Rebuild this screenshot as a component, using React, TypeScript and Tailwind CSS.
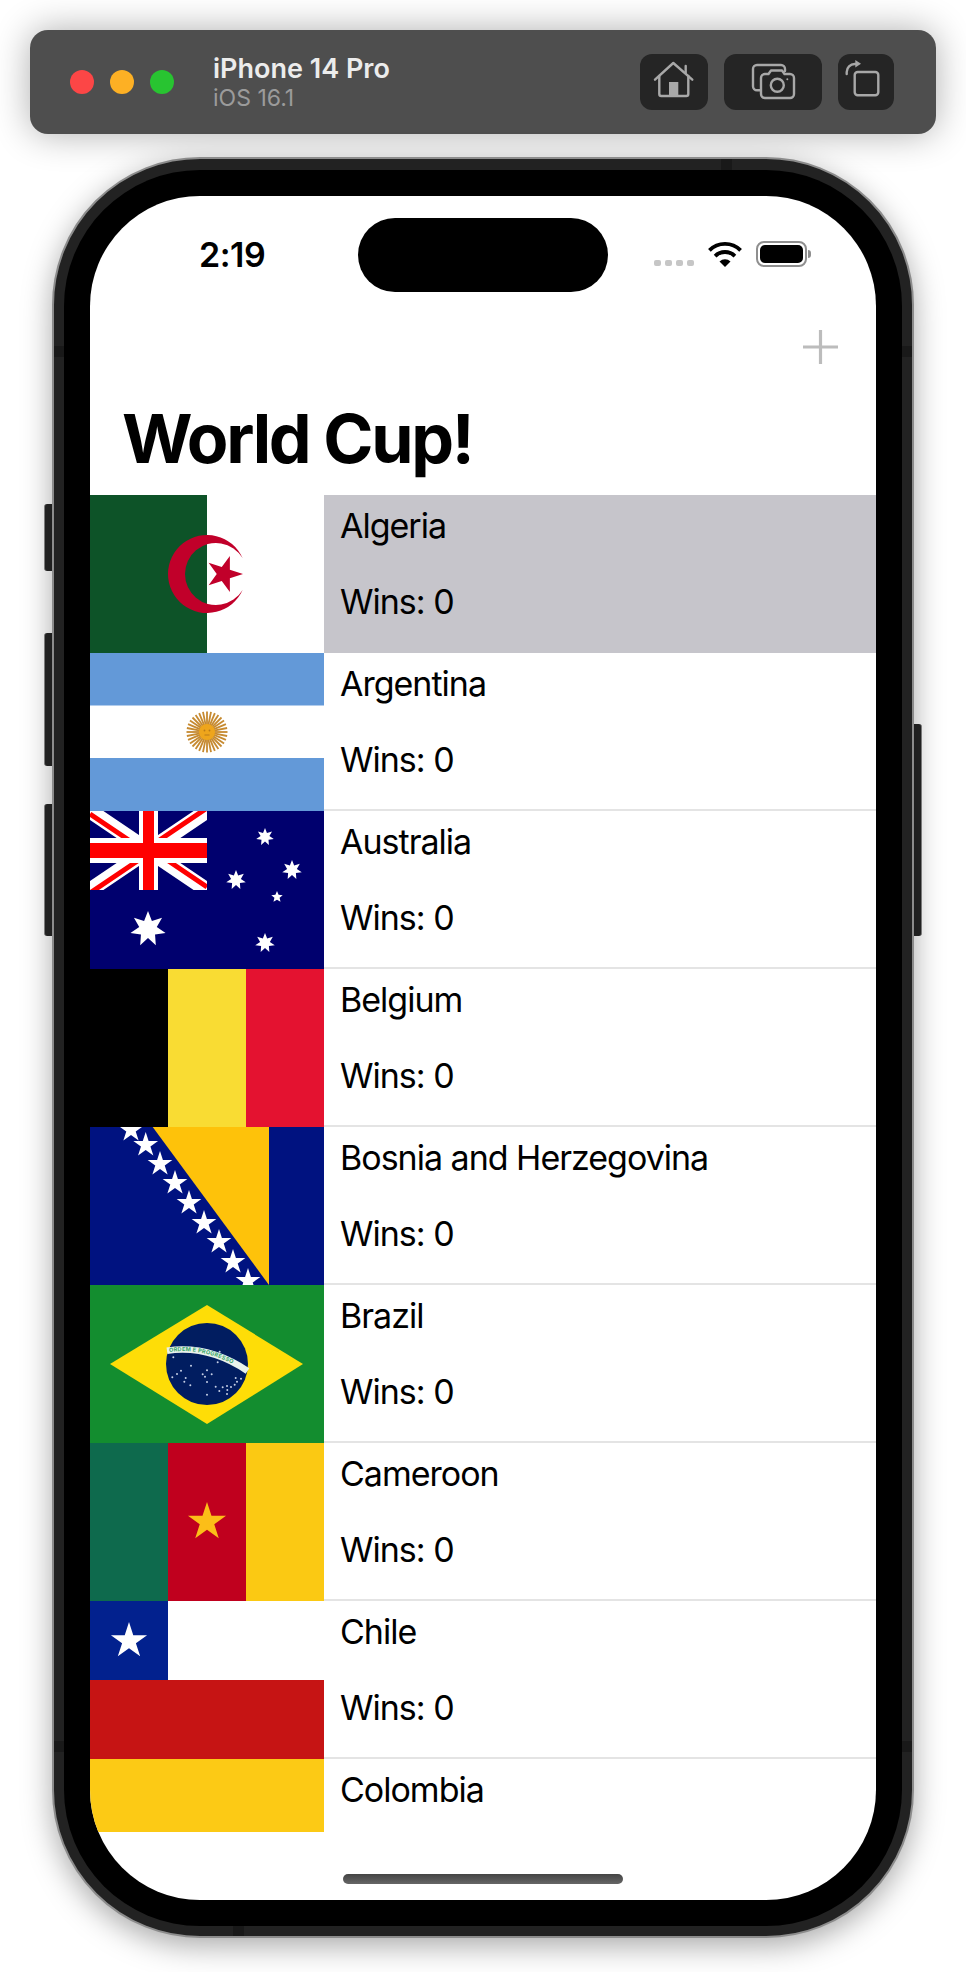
const starPoints = (cx: number, cy: number, R: number, n = 5, ratio = 0.382, rot = -90) =>
  Array.from({ length: n * 2 }, (_, i) => {
    const a = ((rot + (i * 180) / n) * Math.PI) / 180
    const rad = i % 2 === 0 ? R : R * ratio
    return `${(cx + rad * Math.cos(a)).toFixed(2)},${(cy + rad * Math.sin(a)).toFixed(2)}`
  }).join(" ")

function Flag({ children }: { children: React.ReactNode }) {
  return (
    <svg width="234" height="158" viewBox="0 0 234 158" className="block shrink-0">
      {children}
    </svg>
  )
}

const Algeria = () => (
  <Flag>
    <rect width="234" height="158" fill="#fff" />
    <rect width="117" height="158" fill="#0d5328" />
    <path d="M152.6 63.1A39 39 0 1 0 152.6 94.9A31 31 0 1 1 152.6 63.1Z" fill="#c1002a" />
    <polygon points={starPoints(134, 79, 19, 5, 0.382, 0)} fill="#c1002a" />
  </Flag>
)

const Argentina = () => (
  <Flag>
    <rect width="234" height="158" fill="#6399d8" />
    <rect y="52.5" width="234" height="52.5" fill="#fff" />
    {Array.from({ length: 32 }, (_, i) => {
      const a = (i * 2 * Math.PI) / 32
      return (
        <line
          key={i}
          x1={117 + 7 * Math.cos(a)}
          y1={79 + 7 * Math.sin(a)}
          x2={117 + 20.5 * Math.cos(a)}
          y2={79 + 20.5 * Math.sin(a)}
          stroke="#c68a30"
          strokeWidth="1.8"
        />
      )
    })}
    <circle cx="117" cy="79" r="8" fill="#eea51c" />
    <circle cx="114.5" cy="77.5" r="0.9" fill="#b97a18" />
    <circle cx="119.5" cy="77.5" r="0.9" fill="#b97a18" />
    <path d="M114.5 82H119.5" stroke="#b97a18" strokeWidth="1" />
  </Flag>
)

const Australia = () => (
  <Flag>
    <rect width="234" height="158" fill="#00006e" />
    <svg width="117" height="79" viewBox="0 0 117 79">
      <path d="M0 0L117 79M117 0L0 79" stroke="#fff" strokeWidth="15" />
      <path d="M0 3L58 42M117 -3L58.5 36.5M117 76L58.5 36.5M0 82L58.5 42.5" stroke="#f00" strokeWidth="5" />
      <rect y="27" width="117" height="25" fill="#fff" />
      <rect x="49" width="19" height="79" fill="#fff" />
      <rect y="32" width="117" height="15" fill="#f00" />
      <rect x="53" width="11" height="79" fill="#f00" />
    </svg>
    <polygon points={starPoints(58, 118, 18, 7, 0.5)} fill="#fff" />
    <polygon points={starPoints(175, 26, 9, 7, 0.5)} fill="#fff" />
    <polygon points={starPoints(202, 59, 10, 7, 0.5)} fill="#fff" />
    <polygon points={starPoints(146, 69, 10, 7, 0.5)} fill="#fff" />
    <polygon points={starPoints(187, 86, 6, 5, 0.45)} fill="#fff" />
    <polygon points={starPoints(175, 132, 10, 7, 0.5)} fill="#fff" />
  </Flag>
)

const Belgium = () => (
  <Flag>
    <rect width="78" height="158" fill="#000" />
    <rect x="78" width="78" height="158" fill="#f9dc33" />
    <rect x="156" width="78" height="158" fill="#e41230" />
  </Flag>
)

const bosniaStars = [
  [41, 3],
  [55.7, 18],
  [70, 37],
  [85, 56],
  [99, 76],
  [114, 96],
  [129, 115],
  [143, 135],
  [158, 154],
]

const Bosnia = () => (
  <Flag>
    <rect width="234" height="158" fill="#001280" />
    <polygon points="62.7,0 179,0 179,158" fill="#fec20a" />
    {bosniaStars.map(([x, y]) => (
      <polygon key={x} points={starPoints(x, y, 13)} fill="#fff" />
    ))}
  </Flag>
)

const brazilStars = [
  [265, 232], [318, 257], [288, 272], [276, 282], [262, 292], [302, 294], [298, 305], [316, 316], [366, 271],
  [353, 283], [380, 283], [360, 290], [366, 306], [392, 320], [403, 333], [413, 322], [426, 318], [438, 321],
  [449, 314], [456, 305], [452, 294], [468, 296], [427, 330], [426, 342], [366, 344], [404, 215], [398, 247],
]

const Brazil = () => (
  <Flag>
    <rect width="234" height="158" fill="#138d2f" />
    <polygon points="117,20 213,79 117,139 20,79" fill="#fedd07" />
    <circle cx="117" cy="79" r="41" fill="#011d60" />
    <path id="brazil-band" d="M77 65.7Q118.6 59.7 157.5 86" fill="none" stroke="#e8f2ec" strokeWidth="6.5" />
    <text fontSize="5.6" fontWeight="700" fill="#3aa56a" fontFamily="Inter, sans-serif" letterSpacing="0.3">
      <textPath href="#brazil-band" startOffset="2" dominantBaseline="middle">ORDEM E PROGRESSO</textPath>
    </text>
    {brazilStars.map(([x, y]) => (
      <circle key={`${x}-${y}`} cx={(x - 15) / 3} cy={y / 3 - 5} r="1" fill="#c6cfe6" />
    ))}
  </Flag>
)

const Cameroon = () => (
  <Flag>
    <rect width="78" height="158" fill="#0e6a4d" />
    <rect x="78" width="78" height="158" fill="#c0001e" />
    <rect x="156" width="78" height="158" fill="#fbc913" />
    <polygon points={starPoints(117, 79, 20)} fill="#fcbe18" />
  </Flag>
)

const Chile = () => (
  <Flag>
    <rect width="234" height="79" fill="#fff" />
    <rect width="78" height="79" fill="#02218e" />
    <rect y="79" width="234" height="79" fill="#c61414" />
    <polygon points={starPoints(39, 40, 19)} fill="#fff" />
  </Flag>
)

const Colombia = () => (
  <Flag>
    <rect width="234" height="79" fill="#fcca15" />
    <rect y="79" width="234" height="40" fill="#003893" />
    <rect y="119" width="234" height="39" fill="#ce1126" />
  </Flag>
)

// Colombia runs off the bottom of the list, so its wins line never shows
const teams = [
  { name: "Algeria", flag: <Algeria />, wins: 0 },
  { name: "Argentina", flag: <Argentina />, wins: 0 },
  { name: "Australia", flag: <Australia />, wins: 0 },
  { name: "Belgium", flag: <Belgium />, wins: 0 },
  { name: "Bosnia and Herzegovina", flag: <Bosnia />, wins: 0 },
  { name: "Brazil", flag: <Brazil />, wins: 0 },
  { name: "Cameroon", flag: <Cameroon />, wins: 0 },
  { name: "Chile", flag: <Chile />, wins: 0 },
  { name: "Colombia", flag: <Colombia /> },
]

function Toolbar() {
  return (
    <div className="flex h-[104px] w-[906px] items-center rounded-[18px] bg-[#4e4e4e] pl-[40px] pr-[42px] shadow-[0_0_36px_rgba(0,0,0,0.32)]">
      <div className="flex gap-[16px]">
        <div className="h-[24px] w-[24px] rounded-full bg-[#fc4646]" />
        <div className="h-[24px] w-[24px] rounded-full bg-[#fdb024]" />
        <div className="h-[24px] w-[24px] rounded-full bg-[#28c431]" />
      </div>
      <div className="ml-[39px] flex flex-col">
        <span className="text-[27px] font-semibold leading-[32px] text-[#ececec]">iPhone 14 Pro</span>
        <span className="text-[23px] leading-[26px] text-[#9b9b9b]">iOS 16.1</span>
      </div>
      <div className="ml-auto flex gap-[16px]">
        <button className="h-[56px] w-[68px] rounded-[12px] bg-[#252525]">
          <svg width="68" height="56" viewBox="0 0 68 56" fill="none" stroke="#a8a8a8" strokeWidth="2.4" strokeLinecap="round" strokeLinejoin="round">
            <path d="M15 25.7L33.3 9L52.3 25.7" />
            <path d="M45.7 12V19" />
            <path d="M19.3 22V40a2 2 0 0 0 2 2H46.3a2 2 0 0 0 2-2V22" />
            <rect x="29" y="28" width="9.3" height="14" fill="#a8a8a8" stroke="none" />
          </svg>
        </button>
        <button className="h-[56px] w-[98px] rounded-[12px] bg-[#252525]">
          <svg width="98" height="56" viewBox="0 0 98 56" fill="none" stroke="#a8a8a8" strokeWidth="2.4" strokeLinecap="round" strokeLinejoin="round">
            <path d="M36 36.3H33a4 4 0 0 1-4-4V15a4 4 0 0 1 4-4H57a4 4 0 0 1 4 4V17" />
            <path d="M41 20H44.5L47 16.5H58L60.5 20H66a4 4 0 0 1 4 4V40a4 4 0 0 1-4 4H41a4 4 0 0 1-4-4V24a4 4 0 0 1 4-4Z" />
            <circle cx="53.3" cy="31.3" r="6.5" />
            <circle cx="63.3" cy="25.3" r="1" fill="#a8a8a8" stroke="none" />
          </svg>
        </button>
        <button className="h-[56px] w-[56px] rounded-[12px] bg-[#252525]">
          <svg width="56" height="56" viewBox="0 0 56 56" fill="none" stroke="#a8a8a8" strokeWidth="2.4" strokeLinecap="round" strokeLinejoin="round">
            <rect x="16.7" y="18" width="23.6" height="23.3" rx="3" />
            <path d="M8.7 20V18a8 8 0 0 1 8-8H18" />
            <polygon points="17.3,6 23,9.8 17.3,13.4" fill="#a8a8a8" stroke="none" />
          </svg>
        </button>
      </div>
    </div>
  )
}

function StatusBar() {
  return (
    <div className="flex pt-[22px]">
      <div className="flex w-[268px] items-center pl-[109px]">
        <span className="text-[34px] font-semibold leading-[40px] tracking-[-0.5px] text-black">2:19</span>
      </div>
      <div className="h-[74px] w-[250px] rounded-full bg-black" />
      <div className="flex w-[268px] items-center pb-[2px] pl-[46px]">
        <div className="mt-[18px] flex gap-[4.5px]">
          <div className="h-[6.5px] w-[6.5px] rounded-[2px] bg-[#c6c6c6]" />
          <div className="h-[6.5px] w-[6.5px] rounded-[2px] bg-[#c6c6c6]" />
          <div className="h-[6.5px] w-[6.5px] rounded-[2px] bg-[#c6c6c6]" />
          <div className="h-[6.5px] w-[6.5px] rounded-[2px] bg-[#c6c6c6]" />
        </div>
        <svg width="34" height="25" viewBox="0 0 34 25" fill="none" className="ml-[14px]">
          <path d="M1.4 8.4A22 22 0 0 1 32.6 8.4" stroke="#000" strokeWidth="3.8" />
          <path d="M7.1 14.1A14 14 0 0 1 26.9 14.1" stroke="#000" strokeWidth="3.8" />
          <path d="M17 25L11.5 19.5A7.8 7.8 0 0 1 22.5 19.5Z" fill="#000" />
        </svg>
        <div className="ml-[14px] flex items-center">
          <div className="flex h-[26px] w-[51px] items-center justify-center rounded-[8px] border-2 border-[#8f8f8f]">
            <div className="h-[18px] w-[43px] rounded-[5px] bg-black" />
          </div>
          <div className="ml-[1px] h-[8px] w-[3px] rounded-r-[3px] bg-[#8f8f8f]" />
        </div>
      </div>
    </div>
  )
}

function Row({ name, flag, wins, index }: { name: string; flag: React.ReactNode; wins?: number; index: number }) {
  return (
    <div className="flex h-[158px] shrink-0">
      {flag}
      <div
        className={
          index === 0
            ? "flex flex-1 flex-col gap-[36px] bg-[#c6c5cb] pl-[16px] pt-[11px]"
            : "flex flex-1 flex-col gap-[36px] border-b-2 border-[#e4e4e4] pl-[16px] pt-[11px]"
        }
      >
        <span className="text-[34px] leading-[40px] tracking-[-1px] text-black">{name}</span>
        {wins !== undefined && (
          <span className="text-[34px] leading-[40px] tracking-[-1px] text-black">Wins: {wins}</span>
        )}
      </div>
    </div>
  )
}

function Phone() {
  return (
    <div className="relative ml-[22px] mt-[23px] w-[862px]">
      <div className="absolute left-[-8px] top-[347px] h-[67px] w-[9px] rounded-l-[3px] border-l border-[#8a8a8a] bg-[#262626]" />
      <div className="absolute left-[-8px] top-[476px] h-[133px] w-[9px] rounded-l-[3px] border-l border-[#8a8a8a] bg-[#262626]" />
      <div className="absolute left-[-8px] top-[647px] h-[132px] w-[9px] rounded-l-[3px] border-l border-[#8a8a8a] bg-[#262626]" />
      <div className="absolute right-[-8px] top-[567px] h-[212px] w-[9px] rounded-r-[3px] border-r border-[#8a8a8a] bg-[#262626]" />

      <div className="relative rounded-[148px] border-2 border-[#8c8c8c] bg-[#222222] px-[10px] pb-[10px] pt-[11px] shadow-[0_8px_30px_rgba(0,0,0,0.34)]">
        <div className="absolute left-0 top-[187px] h-[11px] w-[10px] bg-[#191919]" />
        <div className="absolute right-0 top-[187px] h-[11px] w-[10px] bg-[#191919]" />
        <div className="absolute bottom-[184px] left-0 h-[11px] w-[10px] bg-[#191919]" />
        <div className="absolute bottom-[184px] right-0 h-[11px] w-[10px] bg-[#191919]" />
        <div className="absolute left-[667px] top-0 h-[11px] w-[11px] bg-[#191919]" />
        <div className="absolute bottom-0 left-[179px] h-[10px] w-[11px] bg-[#191919]" />

        <div className="rounded-[136px] bg-black p-[26px]">
          <div className="flex h-[1704px] flex-col overflow-hidden rounded-[110px] bg-white">
            <StatusBar />
            <div className="mt-[38px] flex justify-end pr-[38px]">
              <svg width="35" height="34" viewBox="0 0 35 34" stroke="#bcbcbc" strokeWidth="3.2">
                <path d="M17.5 0V34M0 17H35" />
              </svg>
            </div>
            <h1 className="mb-[16px] ml-[32px] mt-[33px] text-[68px] font-bold leading-[82px] tracking-[-2.3px] text-black">
              World Cup!
            </h1>
            <div className="flex h-[1337px] flex-col overflow-hidden">
              {teams.map((team, i) => (
                <Row key={team.name} name={team.name} flag={team.flag} wins={team.wins} index={i} />
              ))}
            </div>
            <div className="flex h-[68px] justify-center pt-[42px]">
              <div className="h-[10px] w-[280px] rounded-[5px] bg-gradient-to-b from-[#444444] to-[#666666]" />
            </div>
          </div>
        </div>
      </div>
    </div>
  )
}

export default function App() {
  return (
    <div className="h-[1972px] w-[966px] overflow-hidden bg-white pl-[30px] pt-[30px] font-['Inter',sans-serif]">
      <Toolbar />
      <Phone />
    </div>
  )
}
